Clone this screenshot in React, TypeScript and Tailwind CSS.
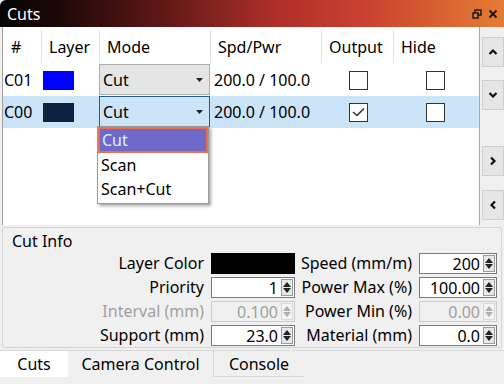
import React from "react";

function Spin({ value, disabled, w = "w-[84px]" }: { value: string; disabled?: boolean; w?: string }) {
  return (
    <div
      className={`flex h-[21px] ${w} items-center border ${
        disabled ? "border-[#cccccc] bg-[#f0f0f0] text-[#a0a0a0]" : "border-[#7a7a7a] bg-white text-black"
      }`}
    >
      <span className="flex-1 pr-[3px] text-right leading-none">{value}</span>
      <div
        className={`mr-[1px] flex h-[17px] w-[12px] flex-col items-center justify-center gap-[1px] border ${
          disabled ? "border-[#d8d8d8] bg-[#f4f4f4]" : "border-[#9a9a9a] bg-[#e8e8e8]"
        }`}
      >
        <svg width="8" height="5" viewBox="0 0 8 5">
          <path d="M0 5 L4 0 L8 5 Z" fill={disabled ? "#b0b0b0" : "#222"} />
        </svg>
        <svg width="8" height="5" viewBox="0 0 8 5">
          <path d="M0 0 L4 5 L8 0 Z" fill={disabled ? "#b0b0b0" : "#222"} />
        </svg>
      </div>
    </div>
  );
}

function Check({ checked }: { checked?: boolean }) {
  return (
    <div className="flex h-[19px] w-[19px] items-center justify-center border border-[#333] bg-white">
      {checked && (
        <svg width="13" height="10" viewBox="0 0 13 10">
          <path d="M1 5 L5 8.5 L12 1.5" stroke="#333" strokeWidth="1.6" fill="none" />
        </svg>
      )}
    </div>
  );
}

function Combo({ active }: { active?: boolean }) {
  return (
    <div
      className={`flex h-full w-full items-center justify-between border pl-[3px] pr-[6px] ${
        active ? "border-[#2b5c85] bg-[#cce4f7]" : "border-[#adadad] bg-[#e5e5e5]"
      }`}
    >
      <span>Cut</span>
      <svg width="7" height="4" viewBox="0 0 7 4">
        <path d="M0 0 L7 0 L3.5 4 Z" fill="#222" />
      </svg>
    </div>
  );
}

function SideBtn({ d, className }: { d: string; className: string }) {
  return (
    <div className={`flex h-[30px] w-[22px] items-center justify-center border border-[#cfcfcf] bg-[#e6e6e6] ${className}`}>
      <svg width="10" height="10" viewBox="0 0 10 10">
        <path d={d} stroke="#111" strokeWidth="2.2" fill="none" />
      </svg>
    </div>
  );
}

function Label({ children, muted }: { children: React.ReactNode; muted?: boolean }) {
  return (
    <div className={`flex h-[21px] justify-end whitespace-nowrap ${muted ? "text-[#a0a0a0]" : ""}`}>{children}</div>
  );
}

export default function App() {
  const cols = "grid grid-cols-[38px_58px_111px_111px_72px_86px]";
  const rows = [
    { id: "C01", color: "bg-[#0000ff]", out: false, active: false },
    { id: "C00", color: "bg-[#0b2340]", out: true, active: true },
  ];

  return (
    <div className="flex h-[384px] w-[504px] flex-col overflow-hidden bg-[#f0f0f0] font-['Noto_Sans',sans-serif] text-[16px] text-black">
      {/* title bar */}
      <div className="flex h-[27px] shrink-0 items-center justify-between rounded-tl-[6px] bg-[linear-gradient(to_right,#050505_0%,#1e0808_12%,#5e1816_32%,#b02f29_55%,#c9402f_72%,#e47c33_100%)] pl-[7px] pr-[6px]">
        <span className="text-[16px] text-white">Cuts</span>
        <div className="flex items-center gap-[6px]">
          <svg width="10" height="10" viewBox="0 0 10 10">
            <rect x="3" y="1" width="6" height="5" stroke="#111" strokeWidth="1.4" fill="none" />
            <rect x="1" y="4" width="5" height="5" stroke="#111" strokeWidth="1.4" fill="#e47c33" />
          </svg>
          <svg width="10" height="10" viewBox="0 0 10 10">
            <path d="M1.5 1.5 L8.5 8.5 M8.5 1.5 L1.5 8.5" stroke="#111" strokeWidth="1.8" />
          </svg>
        </div>
      </div>

      {/* cuts table */}
      <div className="flex h-[198px] shrink-0">
        <div className="relative ml-[2px] flex-1 border-l border-[#a0a0a0] bg-white">
          <div className={`${cols} h-[37px] items-center`}>
            {["#", "Layer", "Mode", "Spd/Pwr", "Output", "Hide"].map((h, i) => (
              <div
                key={h}
                className={`flex h-[32px] items-center pt-[3px] ${i > 0 ? "border-l border-[#e0e0e0]" : ""} ${
                  i === 0 ? "pl-[8px]" : "pl-[7px]"
                }`}
              >
                {h}
              </div>
            ))}
          </div>
          {rows.map((r) => (
            <div key={r.id} className={`${cols} h-[32px] items-center ${r.active ? "bg-[#cce4f7]" : ""}`}>
              <div className="pl-[1px]">{r.id}</div>
              <div className="flex items-center pl-[2px]">
                <div className={`h-[19px] w-[31px] ${r.color}`} />
              </div>
              <div className="h-full pb-[1px]">
                <Combo active={r.active} />
              </div>
              <div className="pl-[4px] whitespace-nowrap">200.0 / 100.0</div>
              <div className="flex justify-center pl-[3px]">
                <Check checked={r.out} />
              </div>
              <div className="flex pl-[33px]">
                <Check />
              </div>
            </div>
          ))}

          {/* dropdown popup */}
          <div className="absolute left-[94px] top-[99px] w-[112px] border border-[#9a9a9a] bg-white pb-[2px] shadow-[2px_2px_3px_rgba(0,0,0,0.35)]">
            <div className="flex h-[26px] items-center border-2 border-[#e8704a] bg-[#6f69c9] pl-[2px] text-[#d8f4ff]">Cut</div>
            <div className="flex h-[24px] items-center pl-[3px]">Scan</div>
            <div className="flex h-[24px] items-center pl-[3px]">Scan+Cut</div>
          </div>
        </div>
        <div className="flex w-[28px] flex-col items-center border-l border-[#a8a8a8] bg-[#f0f0f0] pl-[1px]">
          <SideBtn className="mt-[10px]" d="M1.5 7 L5 3.5 L8.5 7" />
          <SideBtn className="mt-[13px]" d="M1.5 3 L5 6.5 L8.5 3" />
          <SideBtn className="mt-[36px]" d="M3 1.5 L6.5 5 L3 8.5" />
          <SideBtn className="mt-[14px]" d="M7 1.5 L3.5 5 L7 8.5" />
        </div>
      </div>

      {/* cut info group */}
      <div className="mx-[2px] mt-[2px] h-[121px] shrink-0 rounded-[2px] border border-[#d4d4d4] px-[9px] leading-[21px]">
        <div className="mt-[3px] leading-[20px]">Cut Info</div>
        <div className="mt-[2px] grid grid-cols-[192px_84px_110px_78px] items-center gap-x-[7px] gap-y-[3px]">
          <Label>Layer Color</Label>
          <div className="h-[21px] w-[84px] bg-black" />
          <Label>Speed (mm/m)</Label>
          <Spin value="200" w="w-[78px]" />

          <Label>Priority</Label>
          <Spin value="1" />
          <Label>Power Max (%)</Label>
          <Spin value="100.00" w="w-[78px]" />

          <Label muted>Interval (mm)</Label>
          <Spin value="0.100" disabled />
          <Label>Power Min (%)</Label>
          <Spin value="0.00" disabled w="w-[78px]" />

          <Label>Support (mm)</Label>
          <Spin value="23.0" />
          <Label>Material (mm)</Label>
          <Spin value="0.0" w="w-[78px]" />
        </div>
      </div>

      {/* tabs */}
      <div className="mt-[2px] flex h-[27px] shrink-0 border-t border-[#d8d8d8]">
        <div className="flex w-[68px] items-center justify-center bg-white">Cuts</div>
        <div className="flex w-[146px] items-center justify-center border-r border-[#d8d8d8] bg-[#f0f0f0]">Camera Control</div>
        <div className="flex w-[90px] items-center justify-center border-b border-[#d8d8d8] bg-[#f0f0f0]">Console</div>
      </div>
    </div>
  );
}
